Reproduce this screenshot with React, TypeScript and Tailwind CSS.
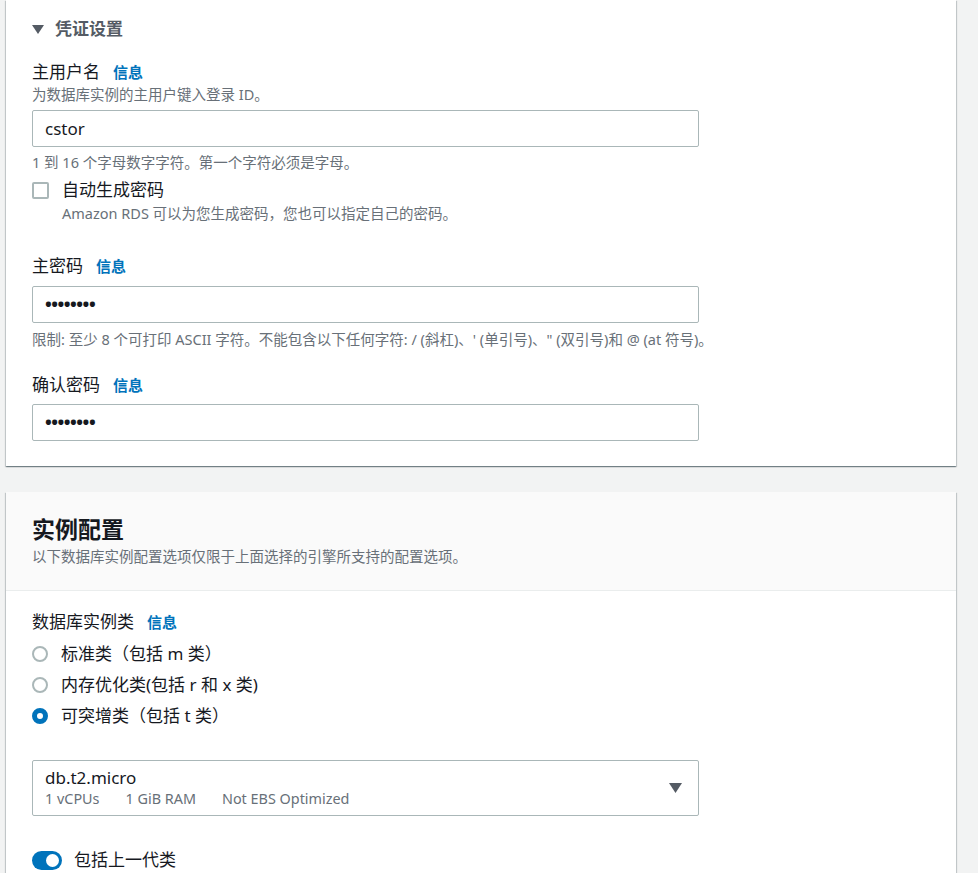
import React from "react";

const font = {
  fontFamily: '"Noto Sans", "Noto Sans CJK SC", sans-serif',
};

function Info() {
  return (
    <span className="ml-[13px] text-[15px] font-bold text-[#0073bb]">信息</span>
  );
}

function Label({ text }: { text: string }) {
  return (
    <div className="flex items-baseline h-[22px] leading-[22px] text-[17px] text-[#16191f]">
      <span>{text}</span>
      <Info />
    </div>
  );
}

function Hint({ text, className = "" }: { text: string; className?: string }) {
  return (
    <div className={`h-[18px] leading-[18px] text-[14.5px] text-[#687078] whitespace-nowrap ${className}`}>
      {text}
    </div>
  );
}

function TextBox({ value, password }: { value: string; password?: boolean }) {
  return (
    <div className="w-[667px] h-[37px] border border-[#aab7b8] rounded-[2px] bg-white flex items-center px-[12px]">
      {password ? (
        <span className="text-[18px] font-bold tracking-[-0.5px] text-[#16191f]">••••••••</span>
      ) : (
        <span className="text-[17px] text-[#16191f]">{value}</span>
      )}
    </div>
  );
}

function Radio({ label, checked }: { label: string; checked?: boolean }) {
  return (
    <div className="flex items-center h-[31px]">
      {checked ? (
        <span className="w-[16px] h-[16px] rounded-full border-[5px] border-[#0073bb] bg-white" />
      ) : (
        <span className="w-[16px] h-[16px] rounded-full border-2 border-[#aab7b8] bg-white" />
      )}
      <span className="ml-[13px] text-[17px] text-[#16191f] leading-[22px]">{label}</span>
    </div>
  );
}

export default function App() {
  return (
    <div className="min-h-screen bg-[#f2f3f3] pl-[6px] pr-[22px]" style={font}>
      {/* 凭证设置 */}
      <div className="bg-white shadow-[0_1px_1px_0_rgba(0,28,36,0.35),1px_1px_1px_0_rgba(0,28,36,0.15),-1px_1px_1px_0_rgba(0,28,36,0.15)] px-[26px] pt-[17px] pb-[25px]">
        <div className="flex items-center h-[24px]">
          <svg width="12" height="9" viewBox="0 0 12 9" className="mr-[11px]">
            <path d="M0 0 L12 0 L6 9 Z" fill="#545b64" />
          </svg>
          <span className="text-[17px] font-bold text-[#545b64]">凭证设置</span>
        </div>

        <div className="mt-[20px]">
          <Label text="主用户名" />
          <Hint text="为数据库实例的主用户键入登录 ID。" className="mt-[2px]" />
          <div className="mt-[7px]">
            <TextBox value="cstor" />
          </div>
          <Hint text="1 到 16 个字母数字字符。第一个字符必须是字母。" className="mt-[6px]" />
        </div>

        <div className="mt-[8px] flex">
          <span className="mt-[3px] w-[17px] h-[17px] border-2 border-[#aab7b8] rounded-[2px] bg-white shrink-0" />
          <div className="ml-[13px]">
            <div className="h-[22px] leading-[22px] text-[17px] text-[#16191f]">自动生成密码</div>
            <Hint text="Amazon RDS 可以为您生成密码，您也可以指定自己的密码。" className="mt-[3px]" />
          </div>
        </div>

        <div className="mt-[33px]">
          <Label text="主密码" />
          <div className="mt-[9px]">
            <TextBox value="" password />
          </div>
          <Hint
            text={"限制: 至少 8 个可打印 ASCII 字符。不能包含以下任何字符: / (斜杠)、' (单引号)、\" (双引号)和 @ (at 符号)。"}
            className="mt-[7px]"
          />
        </div>

        <div className="mt-[26px]">
          <Label text="确认密码" />
          <div className="mt-[8px]">
            <TextBox value="" password />
          </div>
        </div>
      </div>

      {/* 实例配置 */}
      <div className="mt-[26px] bg-white shadow-[0_1px_1px_0_rgba(0,28,36,0.35),1px_1px_1px_0_rgba(0,28,36,0.15),-1px_1px_1px_0_rgba(0,28,36,0.15)]">
        <div className="bg-[#fafafa] border-b border-[#eaeded] px-[26px] pt-[22px] pb-[25px]">
          <div className="h-[30px] leading-[30px] text-[23px] font-bold text-[#16191f]">实例配置</div>
          <Hint text="以下数据库实例配置选项仅限于上面选择的引擎所支持的配置选项。" className="mt-[3px]" />
        </div>

        <div className="px-[26px] pt-[20px] pb-[30px]">
          <Label text="数据库实例类" />
          <div className="mt-[5px]">
            <Radio label="标准类（包括 m 类）" />
            <Radio label="内存优化类(包括 r 和 x 类)" />
            <Radio label="可突增类（包括 t 类）" checked />
          </div>

          <div className="mt-[29px] w-[667px] h-[56px] border border-[#aab7b8] rounded-[2px] bg-white flex items-center justify-between pl-[12px] pr-[16px]">
            <div>
              <div className="h-[22px] leading-[22px] text-[17px] text-[#16191f]">db.t2.micro</div>
              <div className="flex gap-[26px] h-[20px] leading-[20px] text-[14.4px] text-[#687078]">
                <span>1 vCPUs</span>
                <span>1 GiB RAM</span>
                <span>Not EBS Optimized</span>
              </div>
            </div>
            <svg width="13" height="10" viewBox="0 0 13 10">
              <path d="M0 0 L13 0 L6.5 10 Z" fill="#545b64" />
            </svg>
          </div>

          <div className="mt-[33px] flex items-center h-[22px]">
            <span className="relative w-[30px] h-[19px] rounded-full bg-[#0073bb] shrink-0">
              <span className="absolute right-[3px] top-[3px] w-[13px] h-[13px] rounded-full bg-white" />
            </span>
            <span className="ml-[12px] text-[17px] text-[#16191f]">包括上一代类</span>
          </div>
        </div>
      </div>
    </div>
  );
}
